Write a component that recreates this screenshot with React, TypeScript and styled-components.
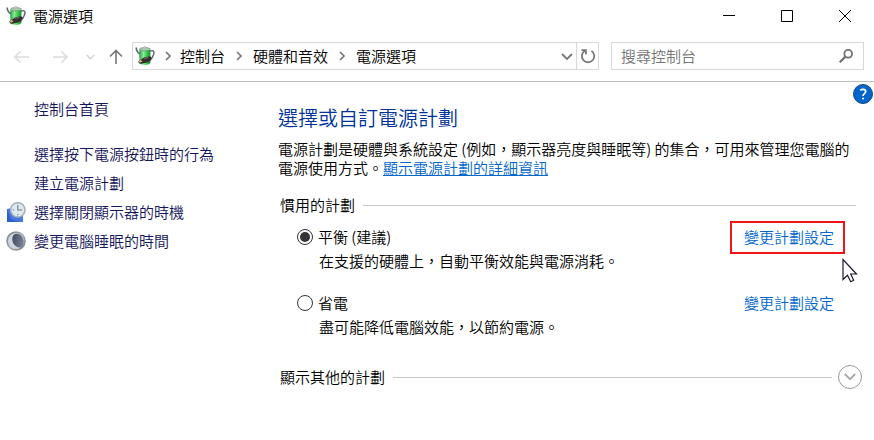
import React, { useState } from "react";
import styled, { createGlobalStyle } from "styled-components";

const GlobalStyle = createGlobalStyle`
  *, *::before, *::after { box-sizing: border-box; }
  body {
    margin: 0;
    background: #fff;
    color: #000;
    font: 350 15px/20px "Noto Sans CJK TC", sans-serif;
  }
  button, input { font: inherit; color: inherit; }
  h1, h2, p, ul { margin: 0; padding: 0; font-weight: inherit; }
  svg { display: block; flex: none; }
`;

const Window = styled.div`
  min-height: 100vh;
  background: #fff;
`;

const TitleBar = styled.header`
  display: flex;
  align-items: center;
  height: 32px;
  padding-left: 6px;
`;

const Title = styled.span`
  flex: 1;
  margin-left: 7px;
`;

const CaptionButton = styled.button`
  display: grid;
  place-items: center;
  width: 58px;
  height: 32px;
  padding: 0;
  border: 0;
  background: none;
`;

const NavBar = styled.nav`
  display: flex;
  align-items: center;
  height: 50px;
  padding: 0 10px 2px 14px;
  border-bottom: 1px solid #bcbcbc;
`;

const NavButton = styled.button<{ $gap?: number }>`
  display: grid;
  place-items: center;
  padding: 0;
  margin-right: ${(p) => p.$gap ?? 0}px;
  border: 0;
  background: none;
`;

const AddressBar = styled.div`
  display: flex;
  flex: 465;
  align-items: center;
  height: 28px;
  border: 1px solid #d9d9d9;
`;

const Crumbs = styled.div`
  display: flex;
  flex: 1;
  align-items: center;
  padding-left: 2px;
`;

const Crumb = styled.a`
  color: #000;
  text-decoration: none;
`;

const Separator = styled.span<{ $width: number }>`
  display: grid;
  place-items: center;
  width: ${(p) => p.$width}px;
`;

const RefreshButton = styled(NavButton)`
  width: 22px;
  height: 26px;
  border-left: 1px solid #d9d9d9;
`;

const SearchBox = styled.label`
  display: flex;
  flex: 232;
  align-items: center;
  height: 28px;
  margin-left: 12px;
  padding: 0 10px 0 9px;
  border: 1px solid #d9d9d9;
`;

const SearchInput = styled.input`
  flex: 1;
  min-width: 0;
  height: 24px;
  padding: 0;
  border: 0;
  outline: 0;
  background: none;
  &::placeholder { color: #757575; opacity: 1; }
`;

const Body = styled.div`
  position: relative;
  display: grid;
  grid-template-columns: 278px minmax(0, 1fr);
`;

const HelpButton = styled.button`
  position: absolute;
  top: 2px;
  right: 1px;
  padding: 0;
  border: 0;
  background: none;
`;

const Sidebar = styled.aside`
  padding: 17px 6px;
`;

const TaskList = styled.ul`
  display: grid;
  gap: 9px;
  margin-top: 25px;
  list-style: none;
`;

const TaskLink = styled.a`
  display: grid;
  grid-template-columns: 20px auto;
  column-gap: 8px;
  align-items: center;
  height: 20px;
  color: #15155c;
  text-decoration: none;
`;

const TaskLabel = styled.span`
  grid-column: 2;
`;

const Main = styled.main`
  padding: 22px 18px 20px 0;
`;

const Heading = styled.h1`
  color: #003399;
  font-size: 20px;
  line-height: 28px;
`;

const Intro = styled.p`
  margin-top: 7px;
  line-height: 19px;
`;

const Link = styled.a<{ $underlined?: boolean }>`
  display: inline-block;
  color: #0066cc;
  text-decoration: ${(p) => (p.$underlined ? "underline" : "none")};
`;

const GroupHeader = styled.div`
  display: flex;
  gap: 8px;
  align-items: center;
  margin-top: 18px;
  padding-left: 2px;
`;

const GroupTitle = styled.h2`
  font-size: 15px;
`;

const Rule = styled.span`
  flex: 1;
  height: 1px;
  background: #c8c8c8;
`;

const Plans = styled.div`
  display: grid;
  gap: 22px;
  margin-top: 12px;
  padding-left: 19px;
`;

const Plan = styled.section`
  display: grid;
  grid-template-columns: minmax(0, 1fr) 126px;
  row-gap: 4px;
`;

const PlanChoice = styled.label`
  display: flex;
  gap: 5px;
  align-items: center;
`;

const Radio = styled.input`
  display: grid;
  place-items: center;
  appearance: none;
  width: 16px;
  height: 16px;
  margin: 0;
  border: 1px solid #333;
  border-radius: 50%;
  &:checked::before {
    content: "";
    width: 10px;
    height: 10px;
    border-radius: 50%;
    background: #333;
  }
`;

const PlanSettings = styled.div`
  position: relative;
  padding-left: 14px;
`;

const Highlight = styled.span`
  position: absolute;
  inset: -6px 11px -7px 0;
  border: 2px solid #f01414;
  pointer-events: none;
`;

const Pointer = styled.svg`
  position: absolute;
  top: 31px;
  right: -2px;
`;

const PlanDescription = styled.p`
  grid-column: 1 / -1;
  padding-left: 22px;
`;

const MoreHeader = styled(GroupHeader)`
  margin-top: 28px;
  margin-right: -6px;
`;

const RoundButton = styled.button`
  display: grid;
  place-items: center;
  width: 24px;
  height: 24px;
  margin-left: -2px;
  padding: 0;
  border: 1px solid #999;
  border-radius: 50%;
  background: none;
`;

function PowerIcon() {
  return (
    <svg width="20" height="20" viewBox="0 0 20 20" aria-hidden="true">
      <defs>
        <linearGradient id="can" x1="0" x2="1">
          <stop offset="0" stopColor="#249a3b" />
          <stop offset=".35" stopColor="#8cec9a" />
          <stop offset=".65" stopColor="#3bcf4d" />
          <stop offset="1" stopColor="#168b2d" />
        </linearGradient>
      </defs>
      <path d="M1.200 1.400c0 3 1.400 5.200 4.200 6.600" fill="none" stroke="#5f6878" strokeWidth="1.600" />
      <path d="M15 5.200c3.600-1.700 4.600.5 3.500 3.600-.7 2.200-1.800 4-3.500 5.700" fill="none" stroke="#5c6472" strokeWidth="1.400" />
      <path d="M4.400 3.400h11v13.400c-1.600 3-9.400 3-11 0z" fill="url(#can)" />
      <ellipse cx="9.900" cy="3.200" rx="5.500" ry="1.700" fill="#a9c9b0" stroke="#5f8b6a" strokeWidth=".6" />
      <path d="M8.500 1.800C8.500.2 11.300.2 11.300 1.800" fill="#e9eeee" stroke="#7b8b82" strokeWidth=".6" />
      <path d="M3 15.800l6.300-4.600 6-.9 1.500 2-2.600 3.700-6.500 1.500-3 .2z" fill="#35302f" />
      <path d="M3.400 15.400l2.300-1.600 1.800 1.800-2.400 1.200z" fill="#c4b078" />
      <path d="M9 12.300l4-.7" stroke="#807a78" />
    </svg>
  );
}

function ClockIcon() {
  return (
    <svg width="20" height="20" viewBox="0 0 20 20" aria-hidden="true">
      <path d="M1 7l5-1 11 7v7H1z" fill="#4a78e0" />
      <path d="M1 7l4 10 8 3H1z" fill="#2f60cc" />
      <circle cx="11.800" cy="7.900" r="7.200" fill="#dfe9f0" stroke="#a3b1bc" strokeWidth="1.500" />
      <path d="M11.800 3v5h4.400M11.800 12v1.200M6.800 8h1.200" fill="none" stroke="#687988" strokeWidth="1.100" />
    </svg>
  );
}

function MoonIcon() {
  return (
    <svg width="20" height="20" viewBox="0 0 20 20" aria-hidden="true">
      <defs>
        <linearGradient id="ring" x1="0" x2="1" y2="1">
          <stop offset="0" stopColor="#70757c" />
          <stop offset=".5" stopColor="#a9adb3" />
          <stop offset="1" stopColor="#71767d" />
        </linearGradient>
        <linearGradient id="night" x1="0" x2="1" y2="1">
          <stop offset="0" stopColor="#3a4152" />
          <stop offset="1" stopColor="#8490a8" />
        </linearGradient>
      </defs>
      <circle cx="10" cy="10" r="9.800" fill="url(#ring)" />
      <circle cx="10" cy="10" r="8" fill="#cfd5df" />
      <ellipse cx="12" cy="9.600" rx="5.400" ry="7.200" transform="rotate(-25 12 9.600)" fill="url(#night)" />
    </svg>
  );
}

function ArrowIcon({ d, color, width = 16 }: { d: string; color: string; width?: number }) {
  return (
    <svg width={width} height="16" viewBox={`0 0 ${width} 16`} fill="none" stroke={color} strokeWidth="1.600" aria-hidden="true">
      <path d={d} />
    </svg>
  );
}

function CrumbSeparator({ width = 28 }: { width?: number }) {
  return (
    <Separator $width={width}>
      <svg width="6" height="10" viewBox="0 0 6 10" fill="none" stroke="#777" strokeWidth="1.600" aria-hidden="true">
        <path d="M1 1l4 4-4 4" />
      </svg>
    </Separator>
  );
}

const tasks = [
  { label: "選擇按下電源按鈕時的行為" },
  { label: "建立電源計劃" },
  { label: "選擇關閉顯示器的時機", icon: <ClockIcon /> },
  { label: "變更電腦睡眠的時間", icon: <MoonIcon /> },
];

const plans = [
  { id: "balanced", name: "平衡 (建議)", description: "在支援的硬體上，自動平衡效能與電源消耗。", highlighted: true },
  { id: "saver", name: "省電", description: "盡可能降低電腦效能，以節約電源。", highlighted: false },
];

export default function App() {
  const [selected, setSelected] = useState("balanced");
  return (
    <Window>
      <GlobalStyle />
      <TitleBar>
        <PowerIcon />
        <Title>電源選項</Title>
        <CaptionButton aria-label="最小化">
          <svg width="12" height="12" viewBox="0 0 12 12" stroke="#000"><path d="M0 5.500h12" /></svg>
        </CaptionButton>
        <CaptionButton aria-label="最大化">
          <svg width="12" height="12" viewBox="0 0 12 12" fill="none" stroke="#000"><path d="M.5.5h11v11H.5z" /></svg>
        </CaptionButton>
        <CaptionButton aria-label="關閉">
          <svg width="12" height="12" viewBox="0 0 12 12" stroke="#000"><path d="M0 0l12 12M12 0L0 12" /></svg>
        </CaptionButton>
      </TitleBar>

      <NavBar aria-label="導覽">
        <NavButton $gap={23} aria-label="上一頁"><ArrowIcon color="#dcdcdc" d="M15 9H1M6.500 3.500L1 9l5.500 5.500" /></NavButton>
        <NavButton $gap={17} aria-label="下一頁"><ArrowIcon color="#dcdcdc" d="M0 9h14M8.500 3.500L14 9l-5.500 5.500" /></NavButton>
        <NavButton $gap={13} aria-label="最近的位置"><ArrowIcon width={9} color="#d4d4d4" d="M.8 7l3.700 3.700L8.200 7" /></NavButton>
        <NavButton $gap={8} aria-label="上一層"><ArrowIcon color="#777" d="M8 16V2.500M2 8.500l6-6 6 6" /></NavButton>
        <AddressBar>
          <Crumbs>
            <PowerIcon />
            <CrumbSeparator width={25} />
            <Crumb href="#control-panel">控制台</Crumb>
            <CrumbSeparator />
            <Crumb href="#hardware">硬體和音效</Crumb>
            <CrumbSeparator />
            <Crumb href="#power">電源選項</Crumb>
          </Crumbs>
          <NavButton $gap={3} aria-label="先前的位置">
            <svg width="12" height="8" viewBox="0 0 12 8" fill="none" stroke="#777" strokeWidth="1.800"><path d="M1 2l5 5 5-5" /></svg>
          </NavButton>
          <RefreshButton aria-label="重新整理">
            <svg width="16" height="16" viewBox="0 0 16 16" fill="none" stroke="#777" strokeWidth="1.800">
              <path d="M11.500 2.900A6.200 6.200 0 1 1 5 2.700" />
              <path d="M1.500 2.200h4.400v4.400" />
            </svg>
          </RefreshButton>
        </AddressBar>
        <SearchBox>
          <SearchInput type="search" placeholder="搜尋控制台" aria-label="搜尋控制台" />
          <svg width="14" height="14" viewBox="0 0 14 14" fill="none" stroke="#707070" strokeWidth="1.800" aria-hidden="true">
            <circle cx="9.200" cy="4.800" r="3.900" />
            <path d="M6.400 7.600L.7 13.300" strokeWidth="2.200" />
          </svg>
        </SearchBox>
      </NavBar>

      <Body>
        <Sidebar>
          <TaskLink href="#home"><TaskLabel>控制台首頁</TaskLabel></TaskLink>
          <TaskList>
            {tasks.map((task) => (
              <li key={task.label}>
                <TaskLink href="#task">
                  {task.icon}
                  <TaskLabel>{task.label}</TaskLabel>
                </TaskLink>
              </li>
            ))}
          </TaskList>
        </Sidebar>

        <Main>
          <Heading>選擇或自訂電源計劃</Heading>
          <Intro>
            電源計劃是硬體與系統設定 (例如，顯示器亮度與睡眠等) 的集合，可用來管理您電腦的電源使用方式。<Link $underlined href="#details">顯示電源計劃的詳細資訊</Link>
          </Intro>
          <GroupHeader>
            <GroupTitle>慣用的計劃</GroupTitle>
            <Rule />
          </GroupHeader>
          <Plans>
            {plans.map((plan) => (
              <Plan key={plan.id}>
                <PlanChoice>
                  <Radio type="radio" name="plan" checked={selected === plan.id} onChange={() => setSelected(plan.id)} />
                  {plan.name}
                </PlanChoice>
                <PlanSettings>
                  <Link href="#settings">變更計劃設定</Link>
                  {plan.highlighted && (
                    <>
                      <Highlight />
                      <Pointer width="16" height="25" viewBox="0 0 16 25" fill="#fff" stroke="#1c1c2c" strokeWidth="1.200" aria-hidden="true">
                        <path d="M1 1.500v20l4.500-4.300 3.200 6.600 3-1.500-3-6.300h5.800z" />
                      </Pointer>
                    </>
                  )}
                </PlanSettings>
                <PlanDescription>{plan.description}</PlanDescription>
              </Plan>
            ))}
          </Plans>
          <MoreHeader>
            <GroupTitle>顯示其他的計劃</GroupTitle>
            <Rule />
            <RoundButton aria-label="顯示其他的計劃">
              <svg width="12" height="8" viewBox="0 0 12 8" fill="none" stroke="#aaa" strokeWidth="1.800"><path d="M.8 1l5.200 5.200L11.200 1" /></svg>
            </RoundButton>
          </MoreHeader>
        </Main>

        <HelpButton aria-label="說明">
          <svg width="20" height="20" viewBox="0 0 20 20">
            <circle cx="10" cy="10" r="9.500" fill="#0066cc" stroke="#174a85" />
            <path d="M7.300 6.300c1.600-1.500 5.400-1.200 5.400 1.300 0 2-2.700 2-2.700 4.400" fill="none" stroke="#fff" strokeWidth="1.700" />
            <circle cx="10" cy="14.500" r="1.100" fill="#fff" />
          </svg>
        </HelpButton>
      </Body>
    </Window>
  );
}
